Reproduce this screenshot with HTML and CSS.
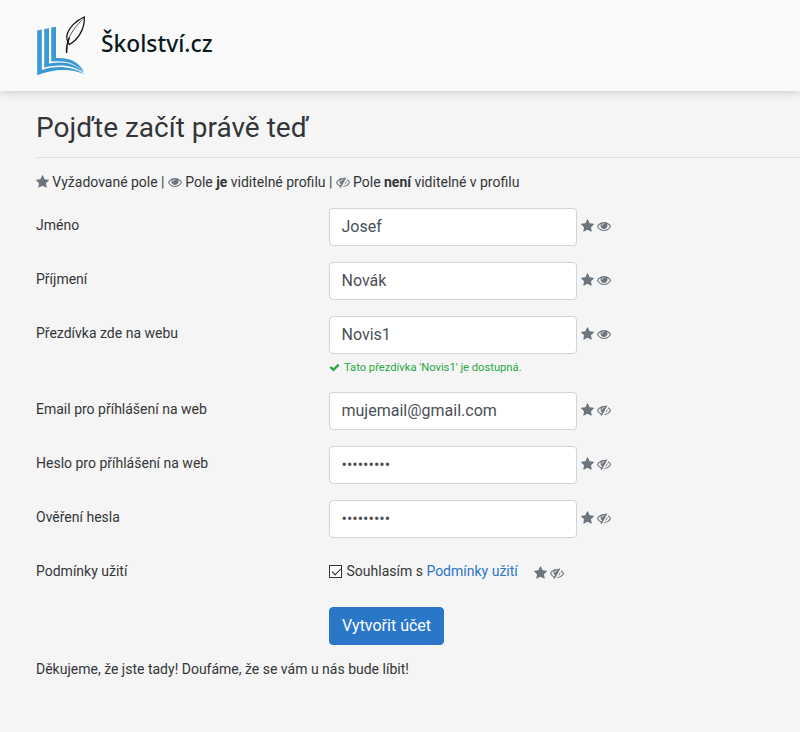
FILE: index.html
```
<!DOCTYPE html>
<html lang="cs">
<head>
    <meta charset="UTF-8">
    <title>Registrace | Školství.cz</title>
    <link rel="stylesheet" href="styles.css">
</head>
<body>
    <svg class="sprite" xmlns="http://www.w3.org/2000/svg">
        <symbol id="star" viewBox="64 0 1664 1792"><path d="M1728 647q0 22-26 48l-363 354 86 500q1 7 1 20 0 21-10.5 35.5t-30.5 14.5q-19 0-40-12l-449-236-449 236q-22 12-40 12-21 0-31.5-14.5t-10.5-35.5q0-6 2-20l86-500-364-354q-25-27-25-48 0-37 56-46l502-73 225-455q19-41 49-41t49 41l225 455 502 73q56 9 56 46z"/></symbol>
        <symbol id="eye" viewBox="0 0 1792 1792"><path d="M1664 960q-152-236-381-353 61 104 61 225 0 185-131.5 316.5t-316.5 131.5-316.5-131.5-131.5-316.5q0-121 61-225-229 117-381 353 133 205 333.5 326.5t434.5 121.5 434.5-121.5 333.5-326.5zm-720-384q0-20-14-34t-34-14q-125 0-214.5 89.5t-89.5 214.5q0 20 14 34t34 14 34-14 14-34q0-86 61-147t147-61q20 0 34-14t14-34zm848 384q0 34-20 69-140 230-376.5 368.5t-499.5 138.5-499.5-139-376.5-368q-20-35-20-69t20-69q140-229 376.5-368t499.5-139 499.5 139 376.5 368q20 35 20 69z"/></symbol>
        <symbol id="eye-slash" viewBox="0 0 1792 1792"><path d="M555 1335l78-141q-87-63-136-159t-49-203q0-121 61-225-229 117-381 353 167 258 427 375zm389-759q0-20-14-34t-34-14q-125 0-214.5 89.5t-89.5 214.5q0 20 14 34t34 14 34-14 14-34q0-86 61-147t147-61q20 0 34-14t14-34zm363-191q0 7-1 9-106 189-316 567t-315 566l-49 89q-10 16-28 16-12 0-134-70-16-10-16-28 0-12 44-87-143-65-263.5-173t-208.5-245q-20-31-20-69t20-69q153-235 380-371t496-136q89 0 180 17l54-97q10-16 28-16 5 0 18 6t31 15.5 33 18.5 31.5 18.5 19.5 11.5q16 10 16 27zm37 447q0 139-79 253.5t-209 164.5l280-502q8 45 8 84zm448 128q0 35-20 69-39 64-109 145-150 172-347.5 267t-419.5 95l74-132q212-18 392.5-137t301.5-307q-115-179-282-294l63-112q95 64 182.5 153t144.5 184q20 34 20 69z"/></symbol>
        <symbol id="check" viewBox="0 0 1792 1792"><path d="M1671 566q0 40-28 68l-724 724-136 136q-28 28-68 28t-68-28l-136-136-362-362q-28-28-28-68t28-68l136-136q28-28 68-28t68 28l294 295 656-657q28-28 68-28t68 28l136 136q28 28 28 68z"/></symbol>
    </svg>

    <header class="header">
        <svg class="logo" viewBox="0 0 50 60">
            <g fill="#3b9ad6">
                <path d="M1.2 14.4L5.8 13.6V54C18 49.5 36 49 48.5 58.5C34 51.5 16 53.5 1.2 59.3z"/>
                <path d="M8.2 13L13 12.2V47.5C26 45 40 46.5 48.3 57.5C37 48.8 24 48 8.2 51.5z"/>
                <path d="M15.2 11.6L20 10.8V42C32 41.2 43 45 48 56C38 45.8 28 44.3 15.2 45.5z"/>
            </g>
            <g fill="none" stroke="#111" stroke-linecap="round">
                <path stroke-width="1.3" d="M48.3 1C41 4 33 11 31 19C30.2 23 31.5 26 33.5 28.5C40 25 49 15 48.3 1z"/>
                <path stroke-width="1.4" d="M30.6 36.5C30.3 32 31 27 33.2 22"/>
                <path stroke-width="0.7" d="M33 22C36.5 14 42 8 46 4"/>
            </g>
        </svg>
        <span class="brand">Školství.cz</span>
    </header>

    <main class="content">
        <h1 class="title">Pojďte začít právě teď</h1>

        <p class="legend">
            <svg class="icon star"><use href="#star"/></svg> Vyžadované pole |
            <svg class="icon"><use href="#eye"/></svg> Pole <b>je</b> viditelné profilu |
            <svg class="icon"><use href="#eye-slash"/></svg> Pole <b>není</b> viditelné v profilu
        </p>

        <form>
            <div class="row">
                <label class="label" for="name">Jméno</label>
                <input class="input" type="text" id="name" value="Josef">
                <span class="marks"><svg class="icon star"><use href="#star"/></svg><svg class="icon"><use href="#eye"/></svg></span>
            </div>
            <div class="row">
                <label class="label" for="surname">Příjmení</label>
                <input class="input" type="text" id="surname" value="Novák">
                <span class="marks"><svg class="icon star"><use href="#star"/></svg><svg class="icon"><use href="#eye"/></svg></span>
            </div>
            <div class="row">
                <label class="label" for="nick">Přezdívka zde na webu</label>
                <input class="input" type="text" id="nick" value="Novis1">
                <span class="marks"><svg class="icon star"><use href="#star"/></svg><svg class="icon"><use href="#eye"/></svg></span>
                <div class="feedback"><svg class="icon"><use href="#check"/></svg>Tato přezdívka 'Novis1' je dostupná.</div>
            </div>
            <div class="row">
                <label class="label" for="email">Email pro příhlášení na web</label>
                <input class="input" type="text" id="email" value="mujemail@gmail.com">
                <span class="marks"><svg class="icon star"><use href="#star"/></svg><svg class="icon"><use href="#eye-slash"/></svg></span>
            </div>
            <div class="row">
                <label class="label" for="password">Heslo pro příhlášení na web</label>
                <input class="input" type="password" id="password" value="heslo1234">
                <span class="marks"><svg class="icon star"><use href="#star"/></svg><svg class="icon"><use href="#eye-slash"/></svg></span>
            </div>
            <div class="row">
                <label class="label" for="password2">Ověření hesla</label>
                <input class="input" type="password" id="password2" value="heslo1234">
                <span class="marks"><svg class="icon star"><use href="#star"/></svg><svg class="icon"><use href="#eye-slash"/></svg></span>
            </div>
            <div class="row terms">
                <span class="label">Podmínky užití</span>
                <div class="agree">
                    <input class="checkbox" type="checkbox" id="agree" checked>
                    <label for="agree">Souhlasím s <a href="#">Podmínky užití</a></label>
                    <span class="marks"><svg class="icon star"><use href="#star"/></svg><svg class="icon"><use href="#eye-slash"/></svg></span>
                </div>
            </div>
            <button class="btn" type="button">Vytvořit účet</button>
        </form>

        <p class="thanks">Děkujeme, že jste tady! Doufáme, že se vám u nás bude líbit!</p>
    </main>
</body>
</html>
```

FILE: styles.css
```
* {
    margin: 0;
    padding: 0;
    box-sizing: border-box;
}

body {
    background: #f5f5f5;
    color: #343538;
    font-family: Roboto, "Liberation Sans", sans-serif;
    font-size: 14px;
    line-height: 21px;
    overflow: hidden;
}

.sprite {
    display: none;
}

.header {
    height: 91px;
    padding: 1px 36px 0;
    display: flex;
    align-items: center;
    background: #fafafa;
    box-shadow: 0 2px 8px rgba(0, 0, 0, 0.14);
}

.logo {
    width: 50px;
    height: 60px;
}

.brand {
    margin-left: 15px;
    padding-bottom: 4px;
    font-family: "Noto Sans", "Open Sans", sans-serif;
    font-size: 22.8px;
    font-weight: 500;
    line-height: 32px;
    color: #0b1a20;
}

.content {
    padding: 19px 0 0 36px;
}

.title {
    height: 48px;
    padding-top: 1px;
    border-bottom: 1px solid #dfdfdf;
    font-size: 28px;
    font-weight: 400;
    line-height: 34px;
}

.legend {
    margin: 14px 0 15px;
    word-spacing: -0.1px;
}

.icon {
    width: 14px;
    height: 14px;
    fill: #6c757d;
    vertical-align: -2px;
}

.icon.star {
    width: 13px;
}

.row {
    display: grid;
    grid-template-columns: 293px 248px auto;
    margin-bottom: 16px;
}

.label {
    padding-top: 7px;
}

.input {
    width: 248px;
    height: 38px;
    padding: 5px 11.5px 7px;
    background: #fff;
    border: 1px solid #ced4da;
    border-radius: 4px;
    color: #495057;
    font-family: inherit;
    font-size: 16px;
}

.marks {
    display: flex;
    gap: 3px;
    padding: 11px 0 0 4px;
}

.feedback {
    grid-column: 2 / 4;
    display: flex;
    align-items: center;
    gap: 4px;
    margin-top: 4px;
    height: 18px;
    font-size: 11.2px;
    color: #28a745;
}

.feedback .icon {
    width: 11px;
    height: 11px;
    fill: #28a745;
}

.terms {
    margin-bottom: 15px;
}

.agree {
    grid-column: 2 / 4;
    display: flex;
    height: 38px;
    padding-top: 7px;
}

.agree .marks {
    padding: 5px 0 0 16px;
}

.checkbox {
    appearance: none;
    position: relative;
    width: 13px;
    height: 13px;
    margin: 4px 4.5px 0 0;
    background: #fff;
    border: 1px solid #333;
}

/* fajfka */
.checkbox:checked::after {
    content: "";
    position: absolute;
    left: 1.5px;
    top: 2px;
    width: 8px;
    height: 4px;
    border: solid #222;
    border-width: 0 0 1.5px 1.5px;
    transform: rotate(-45deg);
}

a {
    color: #2a76c6;
    text-decoration: none;
}

.btn {
    display: block;
    width: 115px;
    height: 38px;
    margin-left: 293px;
    padding-bottom: 2px;
    background: #2a76c9;
    border: 1px solid #2a76c9;
    border-radius: 4px;
    color: #fff;
    font-family: inherit;
    font-size: 16px;
    cursor: pointer;
}

.thanks {
    margin-top: 14px;
}
```
